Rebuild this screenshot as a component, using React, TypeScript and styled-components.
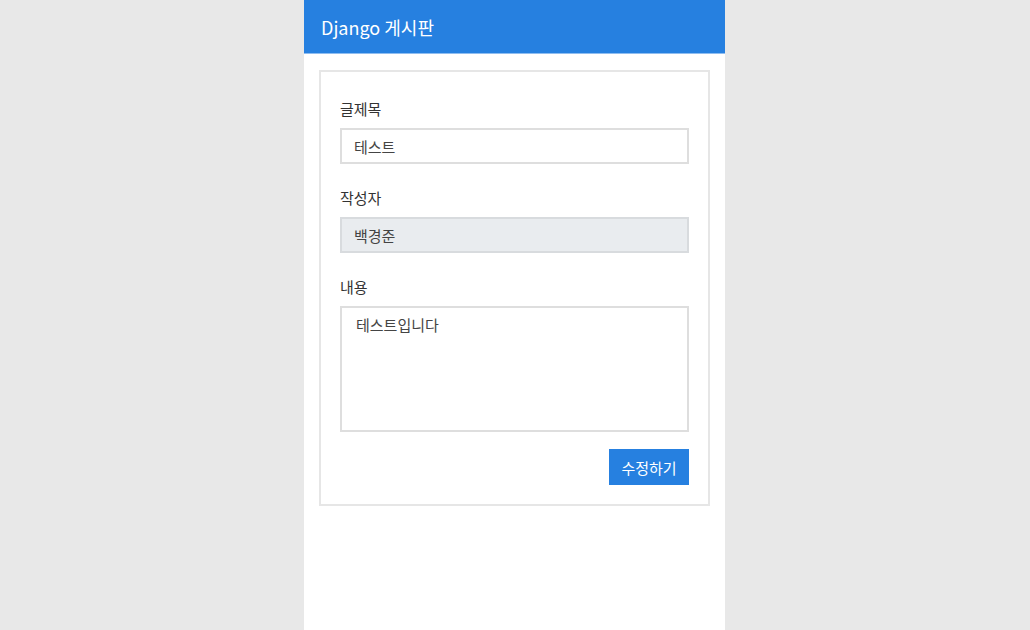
import React from "react";
import styled, { createGlobalStyle } from "styled-components";

const Global = createGlobalStyle`
  html, body { margin: 0; padding: 0; background: #e8e8e8; }
  body { font-family: "Noto Sans CJK KR", "Noto Sans", sans-serif; color: #333; }
  * { box-sizing: border-box; }
`;

const Page = styled.div`
  width: 421px;
  min-height: 630px;
  margin-left: calc(50% - 211px);
  background: #fff;
  display: flex;
  flex-direction: column;
`;

const Header = styled.header`
  height: 54px;
  background: #2680e0;
  border-bottom: 1px solid #8fbdf0;
  display: flex;
  align-items: center;
  padding: 0 17px;
  color: #fff;
  font-size: 18px;
`;

const Card = styled.form`
  margin: 16px 15px 0 15px;
  border: 2px solid #e6e6e6;
  padding: 26px 19px 19px 19px;
  display: flex;
  flex-direction: column;
`;

const Field = styled.div<{ $last?: boolean }>`
  display: flex;
  flex-direction: column;
  margin-bottom: ${(p) => (p.$last ? "17px" : "23px")};
`;

const Label = styled.label`
  font-size: 15px;
  line-height: 22px;
  margin-bottom: 8px;
  color: #333;
`;

const Input = styled.input<{ $readOnly?: boolean }>`
  height: 36px;
  width: 100%;
  border: 2px solid ${(p) => (p.$readOnly ? "#d8dbde" : "#dedede")};
  background: ${(p) => (p.$readOnly ? "#e9ecef" : "#fff")};
  padding: 0 12px;
  font-family: inherit;
  font-size: 15px;
  color: #444;
  outline: none;
`;

const TextArea = styled.textarea`
  height: 126px;
  width: 100%;
  border: 2px solid #dedede;
  padding: 6px 14px;
  font-family: inherit;
  font-size: 15px;
  line-height: 22px;
  color: #444;
  resize: none;
  outline: none;
`;

const Actions = styled.div`
  display: flex;
  justify-content: flex-end;
`;

const Button = styled.button`
  width: 80px;
  height: 36px;
  background: #2680e0;
  color: #fff;
  border: none;
  font-family: inherit;
  font-size: 15px;
  padding: 0;
`;

export default function App() {
  return (
    <>
      <Global />
      <Page>
        <Header>Django 게시판</Header>
        <Card onSubmit={(e) => e.preventDefault()}>
          <Field>
            <Label>글제목</Label>
            <Input defaultValue="테스트" />
          </Field>
          <Field>
            <Label>작성자</Label>
            <Input $readOnly readOnly defaultValue="백경준" />
          </Field>
          <Field $last>
            <Label>내용</Label>
            <TextArea defaultValue="테스트입니다" />
          </Field>
          <Actions>
            <Button type="submit">수정하기</Button>
          </Actions>
        </Card>
      </Page>
    </>
  );
}
